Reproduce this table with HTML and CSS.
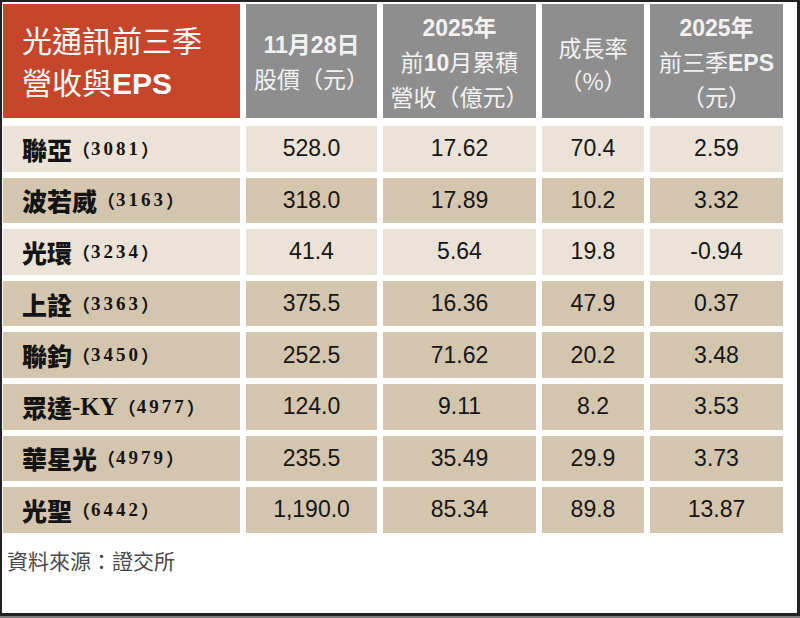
FILE: index.html
```html
<!DOCTYPE html>
<html lang="zh-Hant">
<head>
<meta charset="utf-8">
<title>光通訊前三季營收與EPS</title>
<link rel="stylesheet" href="styles.css">
</head>
<body>
<div class="frame">
  <div class="head">
    <div class="title"><div>光通訊前三季</div><div>營收與<span class="b">EPS</span></div></div>
    <div class="hcell"><div class="bold">11月28日</div><div>股價（元）</div></div>
    <div class="hcell"><div class="bold">2025年</div><div>前<span class="b">10</span>月累積</div><div>營收（億元）</div></div>
    <div class="hcell pad"><div>成長率</div><div>（%）</div></div>
    <div class="hcell"><div class="bold">2025年</div><div>前三季<span class="b">EPS</span></div><div>（元）</div></div>
  </div>
  <div class="body">
    <div class="lab light">聯亞<span class="code">（<span class="num">3081</span>）</span></div>
    <div class="num-cell light">528.0</div><div class="num-cell light">17.62</div><div class="num-cell light">70.4</div><div class="num-cell light">2.59</div>

    <div class="lab dark">波若威<span class="code">（<span class="num">3163</span>）</span></div>
    <div class="num-cell dark">318.0</div><div class="num-cell dark">17.89</div><div class="num-cell dark">10.2</div><div class="num-cell dark">3.32</div>

    <div class="lab light">光環<span class="code">（<span class="num">3234</span>）</span></div>
    <div class="num-cell light">41.4</div><div class="num-cell light">5.64</div><div class="num-cell light">19.8</div><div class="num-cell light">-0.94</div>

    <div class="lab dark">上詮<span class="code">（<span class="num">3363</span>）</span></div>
    <div class="num-cell dark">375.5</div><div class="num-cell dark">16.36</div><div class="num-cell dark">47.9</div><div class="num-cell dark">0.37</div>

    <div class="lab dark">聯鈞<span class="code">（<span class="num">3450</span>）</span></div>
    <div class="num-cell dark">252.5</div><div class="num-cell dark">71.62</div><div class="num-cell dark">20.2</div><div class="num-cell dark">3.48</div>

    <div class="lab dark">眾達<span class="ky">-KY</span><span class="code">（<span class="num">4977</span>）</span></div>
    <div class="num-cell dark">124.0</div><div class="num-cell dark">9.11</div><div class="num-cell dark">8.2</div><div class="num-cell dark">3.53</div>

    <div class="lab dark">華星光<span class="code">（<span class="num">4979</span>）</span></div>
    <div class="num-cell dark">235.5</div><div class="num-cell dark">35.49</div><div class="num-cell dark">29.9</div><div class="num-cell dark">3.73</div>

    <div class="lab dark">光聖<span class="code">（<span class="num">6442</span>）</span></div>
    <div class="num-cell dark">1,190.0</div><div class="num-cell dark">85.34</div><div class="num-cell dark">89.8</div><div class="num-cell dark">13.87</div>
  </div>
  <div class="source">資料來源：證交所</div>
</div>
</body>
</html>
```
FILE: styles.css
```css
html, body {
  margin: 0;
  padding: 0;
}
body {
  width: 800px;
  height: 618px;
  background: #7a7a7a;
  overflow: hidden;
}
.frame {
  box-sizing: border-box;
  width: 800px;
  height: 616px;
  background: #ffffff;
  border-style: solid;
  border-color: #222222;
  border-width: 2px 3px 3px 2px;
  padding: 2px 14px 0 1px;
  font-family: "Liberation Sans", "Noto Sans CJK TC", sans-serif;
}
.head, .body {
  display: grid;
  grid-template-columns: 237px 131px 153px 102px 133px;
  column-gap: 6px;
}
.head {
  height: 114px;
  margin-bottom: 8px;
}
.title {
  background: #c6462b;
  color: #ffffff;
  font-family: "Noto Sans CJK TC", sans-serif;
  font-size: 30px;
  line-height: 42px;
  padding-left: 19px;
  display: flex;
  flex-direction: column;
  justify-content: center;
}
.title .b {
  font-family: "Liberation Sans", sans-serif;
  font-weight: bold;
}
.hcell {
  background: #8e8e8e;
  color: #f2f2f2;
  font-family: "Noto Sans CJK TC", sans-serif;
  font-size: 23px;
  line-height: 33px;
  display: flex;
  flex-direction: column;
  justify-content: center;
  align-items: center;
  padding-top: 2px;
  box-sizing: border-box;
}
.hcell.pad {
  padding-top: 6px;
}
.hcell .bold {
  font-family: "Liberation Sans", "Noto Sans CJK TC", sans-serif;
  font-weight: bold;
}
.hcell .b {
  font-family: "Liberation Sans", sans-serif;
  font-weight: bold;
}
.body {
  grid-auto-rows: 45.6px;
  row-gap: 6px;
}
.light {
  background: #ebe3d7;
}
.dark {
  background: #d4c5af;
}
.lab {
  display: flex;
  align-items: center;
  padding-left: 19px;
  font-family: "Noto Sans CJK TC", serif;
  font-weight: 900;
  font-size: 25px;
  color: #141414;
}
.lab .ky {
  font-family: "Liberation Serif", serif;
  font-weight: bold;
  font-size: 25px;
}
.code {
  font-size: 18px;
  font-weight: 700;
  display: inline-flex;
  align-items: center;
}
.code .num {
  font-family: "Liberation Serif", serif;
  font-weight: bold;
  font-size: 19px;
  letter-spacing: 3px;
  margin-left: 1px;
}
.num-cell {
  display: flex;
  align-items: center;
  justify-content: center;
  font-size: 23px;
  color: #161616;
}
.source {
  margin-top: 15px;
  padding-left: 4px;
  font-family: "Noto Sans CJK TC", sans-serif;
  font-size: 21px;
  line-height: 24px;
  color: #4a4a4a;
}
```
